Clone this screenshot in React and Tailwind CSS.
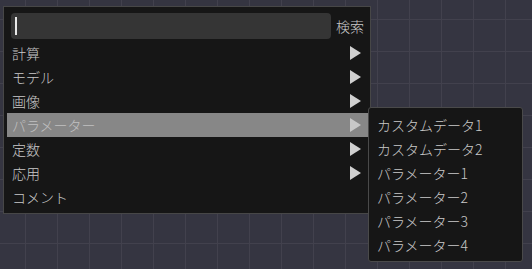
import React from 'react';

const items = [
  { label: '計算', sub: true },
  { label: 'モデル', sub: true },
  { label: '画像', sub: true },
  { label: 'パラメーター', sub: true, active: true },
  { label: '定数', sub: true },
  { label: '応用', sub: true },
  { label: 'コメント', sub: false },
];

const subItems = ['カスタムデータ1', 'カスタムデータ2', 'パラメーター1', 'パラメーター2', 'パラメーター3', 'パラメーター4'];

const Arrow = ({ color = '#d0d0d0' }) => (
  <svg width="11" height="14" viewBox="0 0 11 14" className="shrink-0">
    <polygon points="0,0 11,7 0,14" fill={color} />
  </svg>
);

const App = () => {
  return (
    <div
      className="relative w-[532px] h-[269px] overflow-hidden bg-[#353541] bg-[linear-gradient(to_right,#42414d_1px,transparent_1px),linear-gradient(to_bottom,#42414d_1px,transparent_1px)] bg-size-[32px_32px] bg-position-[25px_19px] pt-[6px] pl-[3px] text-[14px] text-[#c9c9c9] font-light"
      style={{ fontFamily: '"Noto Sans CJK JP", "Noto Sans", sans-serif' }}
    >
      {/* main menu */}
      <div className="w-[368px] h-[208px] bg-[#161616] border border-[#474747] pt-[6px] pl-[3px] pr-[2px]">
        <div className="flex items-center h-[26px]">
          <div className="ml-[4px] w-[320px] h-[26px] rounded-[4px] bg-[#353535] flex items-center pl-[4px]">
            <div className="w-[1.5px] h-[18px] bg-[#e8e8e8]"></div>
          </div>
          <span className="ml-[5px] leading-none">検索</span>
        </div>
        <div className="mt-[2px]">
          {items.map((it) => (
            <div
              key={it.label}
              className={`flex items-center justify-between h-[24px] pl-[5px] pr-[7px] ${it.active ? 'bg-[#878787] text-[#c0c0c0]' : ''}`}
            >
              <span className="leading-none">{it.label}</span>
              {it.sub && <Arrow color={it.active ? '#c8c8c8' : '#d0d0d0'} />}
            </div>
          ))}
        </div>
      </div>

      {/* submenu */}
      <div className="absolute left-[368px] top-[107px] w-[155px] h-[155px] bg-[#161616] border border-[#4a4a4a] rounded-[3px] pt-[5px]">
        {subItems.map((s) => (
          <div key={s} className="h-[24px] flex items-center pl-[8px]">
            <span className="leading-none">{s}</span>
          </div>
        ))}
      </div>
    </div>
  );
};

export default App;
